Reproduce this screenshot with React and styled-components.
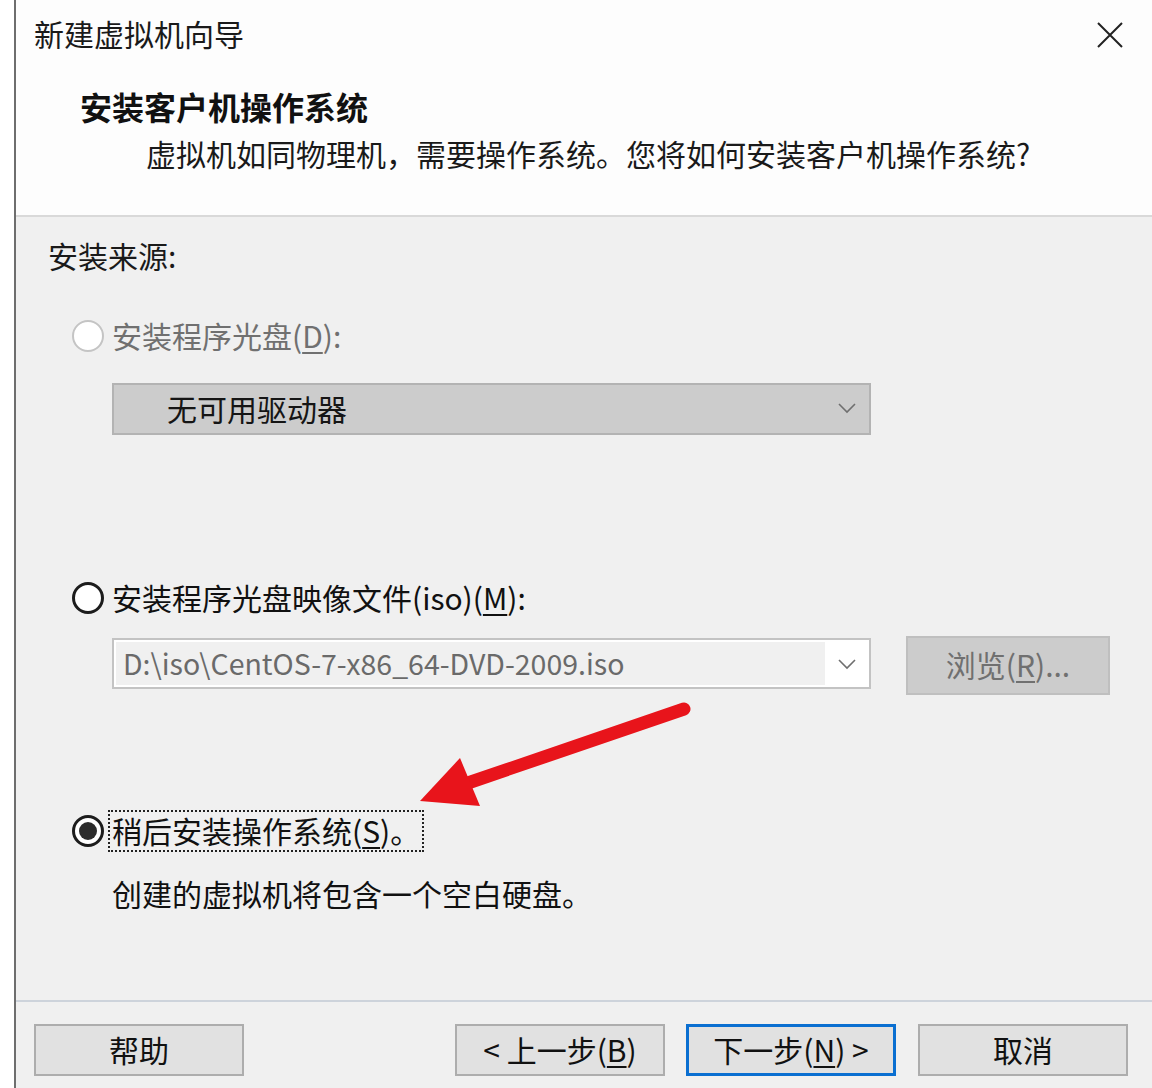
import React from "react";
import styled, { createGlobalStyle } from "styled-components";

const Global = createGlobalStyle`
  html, body { margin: 0; padding: 0; background: #ffffff; }
  body { font-family: "Noto Sans CJK SC", "Noto Sans", sans-serif; color: #111; }
  * { box-sizing: border-box; }
`;

const Page = styled.div`
  display: flex;
  width: 1152px;
  height: 1088px;
  overflow: hidden;
  position: relative;
  background: #fff;
`;

const Margin = styled.div`
  width: 14px;
  flex: none;
  background: #fff;
`;

const Dialog = styled.div`
  flex: 1;
  display: flex;
  flex-direction: column;
  border-left: 2px solid #6e6e6e;
  background: #f0f0f0;
`;

const Header = styled.div`
  height: 217px;
  flex: none;
  background: #fdfdfd;
  border-bottom: 2px solid #d9d9d9;
  display: flex;
  flex-direction: column;
`;

const TitleBar = styled.div`
  height: 70px;
  display: flex;
  align-items: center;
  justify-content: space-between;
  padding: 0 28px 0 18px;
`;

const WindowTitle = styled.div`
  font-size: 30px;
  line-height: 40px;
  padding-bottom: 5px;
  color: #1a1a1a;
`;

const CloseBtn = styled.div`
  width: 28px;
  height: 28px;
  display: flex;
  align-items: center;
  justify-content: center;
`;

const PageTitle = styled.div`
  margin-top: 16px;
  padding-left: 64px;
  font-size: 32px;
  font-weight: 700;
  line-height: 40px;
  color: #111;
`;

const PageSubtitle = styled.div`
  margin-top: 7px;
  padding-left: 130px;
  font-size: 30px;
  line-height: 40px;
  color: #1a1a1a;
`;

const Body = styled.div`
  flex: 1;
  display: flex;
  flex-direction: column;
  padding-left: 32px;
  background: #f0f0f0;
`;

const SectionLabel = styled.div`
  margin-top: 18px;
  font-size: 30px;
  line-height: 40px;
  color: #1a1a1a;
`;

const OptionRow = styled.div`
  margin-top: ${(p) => p.$top}px;
  margin-left: 24px;
  display: flex;
  align-items: center;
  gap: 4px;
  height: 40px;
`;

const Radio = styled.span`
  width: 32px;
  height: 32px;
  flex: none;
  border-radius: 50%;
  background: #fff;
  border: ${(p) => (p.$disabled ? "2px solid #c4c4c4" : "3px solid #1c1c1c")};
  display: flex;
  align-items: center;
  justify-content: center;
  &::after {
    content: "";
    display: ${(p) => (p.$checked ? "block" : "none")};
    width: 18px;
    height: 18px;
    border-radius: 50%;
    background: #2b2b2b;
  }
`;

const OptionLabel = styled.span`
  font-size: 30px;
  line-height: 36px;
  padding: 0 2px 2px;
  color: ${(p) => (p.$disabled ? "#707070" : "#111")};
  border: 2px ${(p) => (p.$focused ? "dotted #222" : "solid transparent")};
  white-space: nowrap;
`;

const Key = styled.u`
  text-decoration-thickness: 2px;
  text-underline-offset: 4px;
`;

const Indented = styled.div`
  margin-top: ${(p) => p.$top}px;
  margin-left: 64px;
  display: flex;
  align-items: flex-start;
  gap: 35px;
`;

const DisabledSelect = styled.div`
  width: 759px;
  height: 52px;
  background: #cccccc;
  border: 2px solid #b3b3b3;
  display: flex;
  align-items: center;
  padding: 0 12px 3px 53px;
  font-size: 30px;
  color: #151515;
`;

const SelectText = styled.span`
  flex: 1;
`;

const Combo = styled.div`
  margin-top: 2px;
  width: 759px;
  height: 51px;
  background: #fff;
  border: 2px solid #c3c3c3;
  display: flex;
  align-items: center;
  padding: 2px 12px 2px 2px;
`;

const ComboField = styled.div`
  width: 709px;
  height: 43px;
  background: #f0f0f0;
  display: flex;
  align-items: center;
  padding: 0 0 3px 7px;
  font-size: 28.5px;
  color: #6a6a6a;
  white-space: nowrap;
`;

const ChevronBox = styled.span`
  flex: 1;
  display: flex;
  justify-content: flex-end;
`;

const BrowseBtn = styled.div`
  width: 204px;
  height: 59px;
  background: #cccccc;
  border: 2px solid #bfbfbf;
  display: flex;
  align-items: center;
  justify-content: center;
  padding-bottom: 3px;
  font-size: 30px;
  color: #707070;
`;

const Description = styled.div`
  margin-top: 22px;
  margin-left: 64px;
  font-size: 30px;
  line-height: 40px;
  color: #111;
`;

const Footer = styled.div`
  height: 88px;
  flex: none;
  border-top: 2px solid #cdd3db;
  display: flex;
  align-items: flex-start;
  padding: 22px 24px 0 18px;
  background: #f0f0f0;
`;

const Button = styled.div`
  width: 210px;
  height: 52px;
  background: #e1e1e1;
  border: ${(p) => (p.$default ? "3px solid #0a6fd1" : "2px solid #adadad")};
  display: flex;
  align-items: center;
  justify-content: center;
  padding-bottom: 3px;
  font-size: 30px;
  color: #111;
  margin-left: ${(p) => p.$ml || 0}px;
  white-space: nowrap;
`;

const Annotation = styled.svg`
  position: absolute;
  left: 0;
  top: 0;
  pointer-events: none;
`;

const Chevron = () => (
  <svg width="20" height="12" viewBox="0 0 20 12">
    <path d="M2 2 L10 10 L18 2" fill="none" stroke="#6f6f6f" strokeWidth="1.6" />
  </svg>
);

export default function App() {
  return (
    <>
      <Global />
      <Page>
        <Margin />
        <Dialog>
          <Header>
            <TitleBar>
              <WindowTitle>新建虚拟机向导</WindowTitle>
              <CloseBtn>
                <svg width="26" height="26" viewBox="0 0 26 26">
                  <path d="M1 1 L25 25 M25 1 L1 25" stroke="#222" strokeWidth="2" />
                </svg>
              </CloseBtn>
            </TitleBar>
            <PageTitle>安装客户机操作系统</PageTitle>
            <PageSubtitle>虚拟机如同物理机，需要操作系统。您将如何安装客户机操作系统?</PageSubtitle>
          </Header>
          <Body>
            <SectionLabel>安装来源:</SectionLabel>
            <OptionRow $top={41}>
              <Radio $disabled />
              <OptionLabel $disabled>
                安装程序光盘(<Key>D</Key>):
              </OptionLabel>
            </OptionRow>
            <Indented $top={27}>
              <DisabledSelect>
                <SelectText>无可用驱动器</SelectText>
                <Chevron />
              </DisabledSelect>
            </Indented>
            <OptionRow $top={143}>
              <Radio />
              <OptionLabel>
                安装程序光盘映像文件(iso)(<Key>M</Key>):
              </OptionLabel>
            </OptionRow>
            <Indented $top={18}>
              <Combo>
                <ComboField>D:\iso\CentOS-7-x86_64-DVD-2009.iso</ComboField>
                <ChevronBox>
                  <Chevron />
                </ChevronBox>
              </Combo>
              <BrowseBtn>
                浏览(<Key>R</Key>)...
              </BrowseBtn>
            </Indented>
            <OptionRow $top={116}>
              <Radio $checked />
              <OptionLabel $focused>
                稍后安装操作系统(<Key>S</Key>)。
              </OptionLabel>
            </OptionRow>
            <Description>创建的虚拟机将包含一个空白硬盘。</Description>
          </Body>
          <Footer>
            <Button>帮助</Button>
            <Button $ml={211}>
              &lt; 上一步(<Key>B</Key>)
            </Button>
            <Button $ml={21} $default>
              下一步(<Key>N</Key>) &gt;
            </Button>
            <Button $ml={22}>取消</Button>
          </Footer>
        </Dialog>
        <Annotation width="1152" height="1088" viewBox="0 0 1152 1088">
          <line x1="684" y1="709" x2="462" y2="785" stroke="#e8141b" strokeWidth="13" strokeLinecap="round" />
          <polygon points="420,801 460,758 480,806" fill="#e8141b" />
        </Annotation>
      </Page>
    </>
  );
}
